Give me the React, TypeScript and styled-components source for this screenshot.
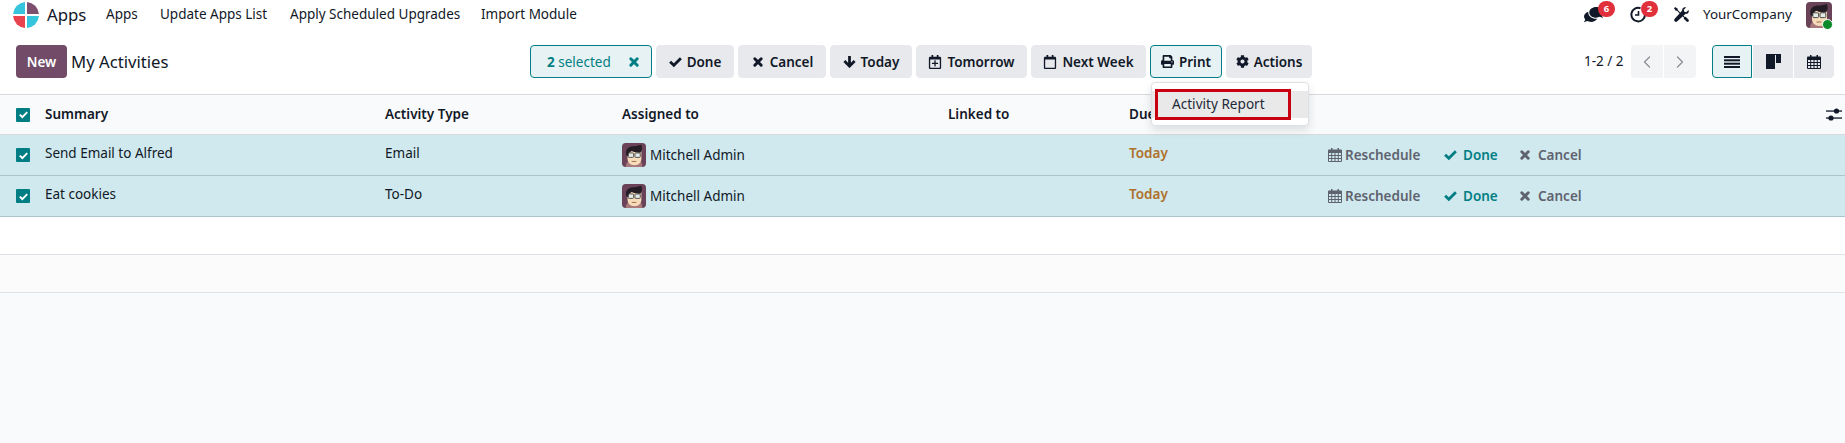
import React from "react";
import styled, { createGlobalStyle } from "styled-components";
import { FaPrint, FaCog, FaRegCalendarPlus, FaRegCalendar, FaComments } from "react-icons/fa";
import { LuChevronLeft, LuChevronRight } from "react-icons/lu";

const Global = createGlobalStyle`
  html, body { margin: 0; padding: 0; background: #f9fafb; }
  body { font-family: "Noto Sans", "Open Sans", sans-serif; font-size: 13.5px; color: #111827; }
  * { box-sizing: border-box; }
`;

const Page = styled.div`
  width: 1845px;
  height: 443px;
  overflow: hidden;
  display: flex;
  flex-direction: column;
`;

const Navbar = styled.header`
  height: 29px;
  background: #fff;
  display: flex;
  align-items: center;
  padding-left: 13px;
`;
const LogoWrap = styled.svg`
  width: 26px;
  height: 26px;
  margin-right: 8px;
`;
const BrandName = styled.span`
  font-size: 16.8px;
  width: 59px;
  color: #111827;
  margin-top: -1px;
`;
const NavItem = styled.span<{ $w: number }>`
  width: ${(p) => p.$w}px;
  color: #111827;
  font-size: 13.5px;
  white-space: nowrap;
  margin-top: -1px;
`;
const NavRight = styled.div`
  margin-left: auto;
  display: flex;
  align-items: center;
  padding-right: 13px;
`;
const Systray = styled.span<{ $w: number }>`
  position: relative;
  width: ${(p) => p.$w}px;
  height: 26px;
  display: flex;
  align-items: center;
  color: #111827;
`;
const Badge = styled.span<{ $left: number }>`
  position: absolute;
  left: ${(p) => p.$left}px;
  top: -1px;
  width: 17px;
  height: 16px;
  border-radius: 8px;
  background: #e0303c;
  color: #fff;
  font-size: 9.5px;
  font-weight: 700;
  display: flex;
  align-items: center;
  justify-content: center;
`;
const Company = styled.span`
  width: 103px;
  font-size: 13.4px;
  white-space: nowrap;
  margin-top: -1px;
`;
const AvatarBox = styled.span`
  position: relative;
  width: 26px;
  height: 26px;
  display: block;
`;
const StatusDot = styled.span`
  position: absolute;
  right: -1px;
  bottom: -2px;
  width: 11px;
  height: 11px;
  border-radius: 50%;
  background: #0b8a2c;
  border: 1px solid #fff;
`;

const ControlPanel = styled.div`
  height: 65px;
  background: #fff;
  padding: 16px 11px 16px 16px;
  display: flex;
  align-items: flex-start;
`;
const NewButton = styled.button`
  width: 51px;
  height: 33px;
  border: 0;
  border-radius: 4px;
  background: #714b67;
  color: #fff;
  font: 600 13.5px "Noto Sans", sans-serif;
  padding: 0;
`;
const Title = styled.h1`
  margin: 0 0 0 4px;
  width: 459px;
  font-size: 16.7px;
  line-height: 33px;
  font-weight: 400;
  color: #111827;
`;
const ButtonRow = styled.div`
  display: flex;
  gap: 4px;
  width: 1054px;
`;
const ActionWrap = styled.div`
  position: relative;
`;
const ActionButton = styled.button<{ $w: number; $active?: boolean }>`
  width: ${(p) => p.$w}px;
  height: 33px;
  padding: 0;
  border-radius: 4px;
  border: 1px solid ${(p) => (p.$active ? "#017e84" : "#e7e9ed")};
  background: ${(p) => (p.$active ? "#e6f2f3" : "#e7e9ed")};
  color: #111827;
  font: 600 13.5px "Noto Sans", sans-serif;
  display: flex;
  align-items: center;
  justify-content: center;
  gap: 5px;
  white-space: nowrap;
  svg { flex: none; }
`;
const SelectedBox = styled.div`
  width: 122px;
  height: 33px;
  border-radius: 4px;
  border: 1px solid #017e84;
  background: #e6f2f3;
  color: #017e84;
  display: flex;
  align-items: center;
  padding: 0 10px 0 16px;
  justify-content: space-between;
  font-size: 13.5px;
  b { font-weight: 700; }
`;
const Menu = styled.div`
  position: absolute;
  left: 1px;
  top: 37px;
  width: 158px;
  height: 44px;
  background: #fff;
  border: 1px solid #dee2e6;
  border-radius: 4px;
  box-shadow: 0 4px 10px rgba(0, 0, 0, 0.12);
  padding-top: 8px;
  z-index: 5;
`;
const MenuItem = styled.div`
  position: relative;
  height: 27px;
  background: #e9e9ea;
  padding-left: 20px;
  font-size: 13.6px;
  line-height: 26px;
  color: #1f2937;
`;
const Highlight = styled.span`
  position: absolute;
  left: 3px;
  top: -2px;
  width: 136px;
  height: 31px;
  border: 3px solid #c8000f;
`;
const Pager = styled.span`
  width: 47px;
  line-height: 33px;
  font-size: 13.5px;
  white-space: nowrap;
`;
const PagerGroup = styled.div`
  display: flex;
  gap: 1px;
  width: 81px;
`;
const PagerBtn = styled.span<{ $left?: boolean }>`
  width: 32px;
  height: 33px;
  background: #f3f4f5;
  border-radius: ${(p) => (p.$left ? "4px 0 0 4px" : "0 4px 4px 0")};
  display: flex;
  align-items: center;
  justify-content: center;
  color: #8b8f96;
`;
const ViewGroup = styled.div`
  display: flex;
  gap: 1px;
`;
const ViewBtn = styled.span<{ $active?: boolean; $pos: "l" | "m" | "r" }>`
  width: 40px;
  height: 33px;
  background: ${(p) => (p.$active ? "#e6f2f3" : "#e7e9ed")};
  border: 1px solid ${(p) => (p.$active ? "#017e84" : "#e7e9ed")};
  border-radius: ${(p) => (p.$pos === "l" ? "4px 0 0 4px" : p.$pos === "r" ? "0 4px 4px 0" : "0")};
  display: flex;
  align-items: center;
  justify-content: center;
  color: #111827;
`;

const Table = styled.table`
  width: 1845px;
  table-layout: fixed;
  border-collapse: collapse;
  background: #fff;
`;
const HeadRow = styled.tr`
  height: 40px;
  background: #f9fafb;
  border-top: 1px solid #d8dadd;
  border-bottom: 1px solid #d8dadd;
`;
const Th = styled.th`
  padding: 0 7px 1px;
  text-align: left;
  font-weight: 600;
  font-size: 13.5px;
  color: #111827;
  white-space: nowrap;
`;
const Row = styled.tr`
  height: 41px;
  background: #cfe9ee;
  border-bottom: 1px solid #a8c6cc;
`;
const Td = styled.td<{ $warn?: boolean }>`
  padding: 0 7px 5px;
  font-size: 13.5px;
  white-space: nowrap;
  color: ${(p) => (p.$warn ? "#b0702a" : "#111827")};
  font-weight: ${(p) => (p.$warn ? 600 : 400)};
`;
const EmptyRow = styled.tr<{ $alt?: boolean }>`
  height: 38px;
  background: ${(p) => (p.$alt ? "#fbfbfc" : "#fff")};
  border-bottom: 1px solid #dee2e6;
`;
const CheckCell = styled.td`
  padding: 0 0 0 16px;
`;
const CheckHead = styled.th`
  padding: 0 0 0 16px;
`;
const Check = styled.span`
  width: 14px;
  height: 14px;
  display: flex;
  align-items: center;
  justify-content: center;
  background: #017e84;
  border-radius: 1px;
  color: #fff;
`;
const Assignee = styled.span`
  display: flex;
  align-items: center;
  gap: 4px;
  padding-top: 5px;
`;
const RowActions = styled.div`
  display: flex;
  align-items: center;
  padding-top: 4px;
  padding-left: 1px;
  font-weight: 600;
`;
const RowAction = styled.span<{ $w: number; $teal?: boolean; $gap: number }>`
  width: ${(p) => p.$w}px;
  display: flex;
  align-items: center;
  gap: ${(p) => p.$gap}px;
  color: ${(p) => (p.$teal ? "#017e84" : "#5f636f")};
`;
const AdjustCell = styled.th`
  text-align: right;
  padding: 2px 3px 0 0;
`;

const Logo = () => (
  <LogoWrap viewBox="0 0 26 26">
    <path d="M12 .05A13 13 0 0 0 .05 12H12Z" fill="#35c5dd" />
    <path d="M14 .05A13 13 0 0 1 25.950 12H14Z" fill="#7d4f6f" />
    <path d="M12 25.950A13 13 0 0 1 .05 14H12Z" fill="#e8434f" />
    <path d="M14 25.950A13 13 0 0 0 25.950 14H14Z" fill="#35c5dd" />
  </LogoWrap>
);

const Avatar = ({ size }: { size: number }) => (
  <svg width={size} height={size} viewBox="0 0 26 26" style={{ display: "block", flex: "none" }}>
    <rect width="26" height="26" rx="4" fill="#6a4358" />
    <path d="M4 26c0-4 2-6 4-7h11c2 1 3 3 3 7Z" fill="#a9787a" />
    <path d="M6 9h15v8c0 4-3 7-7.500 7S6 21 6 17Z" fill="#f6dcb8" />
    <path d="M4.500 13C3 5 9 3 14 3.500l7-1.500c1 3 1 6-1 8.500-4 0-7 0-9.500-2L8 10.500V14H6Z" fill="#241d26" />
    <rect x="6.800" y="10.800" width="5.800" height="4.800" rx="1" fill="#e4eae6" stroke="#3a3a3a" strokeWidth=".9" />
    <rect x="14" y="10.800" width="5.800" height="4.800" rx="1" fill="#e4eae6" stroke="#3a3a3a" strokeWidth=".9" />
    <path d="M10.500 20h5" stroke="#9a6a48" strokeWidth="1" />
  </svg>
);

const ClockIcon = () => (
  <svg width="17" height="17" viewBox="0 0 17 17" fill="none" stroke="#111827" strokeWidth="2">
    <path d="M10.500 2.200A6.800 6.800 0 1 0 15 8.500" />
    <path d="M8.500 5v4H5" strokeWidth="1.600" />
  </svg>
);
const ToolsIcon = () => (
  <svg width="15" height="15" viewBox="0 0 16 16" fill="#111827">
    <path d="M1.200 0 4 1.800v1.400l7.500 7.500.9-.3 3 3a1.300 1.300 0 0 1-2 2l-3-3 .3-.9L3.200 4H1.800L0 1.200Z" />
    <path d="M15.500 3.200 13 5.600l-2-.6-.6-2L12.900.5C11-.4 8.500 1 8.700 3.600L.8 12.500a1.900 1.900 0 0 0 2.700 2.700l8.900-7.900c2.600.2 4-2.200 3.100-4.100Z" />
  </svg>
);
const HeavyCheck = ({ w }: { w: number }) => (
  <svg width={w} height={w} viewBox="0 0 14 14" fill="none" stroke="currentColor" strokeWidth="3" style={{ flex: "none" }}>
    <path d="M1.200 7.200 5.200 11 12.800 3.400" />
  </svg>
);
const HeavyX = ({ w }: { w: number }) => (
  <svg width={w} height={w} viewBox="0 0 14 14" fill="none" stroke="currentColor" strokeWidth="3" strokeLinecap="round" style={{ flex: "none" }}>
    <path d="M3.800 3.800l6.400 6.400M10.200 3.800l-6.400 6.400" />
  </svg>
);
const HeavyArrow = () => (
  <svg width={13} height={13} viewBox="0 0 14 14" fill="none" stroke="currentColor" strokeWidth="3" style={{ flex: "none" }}>
    <path d="M7 1v10.500M1.500 6.500 7 12l5.500-5.500" />
  </svg>
);
const ListIcon = () => (
  <svg width="16" height="12" viewBox="0 0 16 12" fill="#111827">
    <rect width="16" height="2" />
    <rect y="3.300" width="16" height="2" />
    <rect y="6.700" width="16" height="2" />
    <rect y="10" width="16" height="2" />
  </svg>
);
const KanbanIcon = () => (
  <svg width="15" height="15" viewBox="0 0 15 15" fill="#111827">
    <path d="M0 0h15v9H10V1H9v14H0Z" />
  </svg>
);
const GridCalendar = ({ w }: { w: number }) => (
  <svg width={w} height={w} viewBox="0 0 14 14" fill="currentColor" style={{ flex: "none" }}>
    <path d="M3 0h1.500v2H3zM9.500 0H11v2H9.500z" />
    <path
      fillRule="evenodd"
      d="M1.200 1.500H13a1 1 0 0 1 1 1V13a1 1 0 0 1-1 1H1a1 1 0 0 1-1-1V2.500a1 1 0 0 1 1.200-1ZM1 5v2h2.200V5Zm3.200 0v2h2.300V5Zm3.300 0v2h2.300V5Zm3.300 0v2H13V5ZM1 8v2h2.200V8Zm3.200 0v2h2.300V8Zm3.300 0v2h2.300V8Zm3.300 0v2H13V8ZM1 11v2h2.200v-2Zm3.200 0v2h2.300v-2Zm3.300 0v2h2.300v-2Zm3.300 0v2H13v-2Z"
    />
  </svg>
);
const AdjustIcon = () => (
  <svg width="16" height="13" viewBox="0 0 16 13" fill="#111827">
    <rect y="2.400" width="16" height="1.300" />
    <circle cx="10.500" cy="3" r="2.600" />
    <rect y="9.400" width="16" height="1.300" />
    <circle cx="5" cy="10" r="2.600" />
  </svg>
);

const Tick = () => (
  <Check>
    <HeavyCheck w={9} />
  </Check>
);

const rows = [
  { summary: "Send Email to Alfred", type: "Email" },
  { summary: "Eat cookies", type: "To-Do" },
];

export default function App() {
  return (
    <Page>
      <Global />
      <Navbar>
        <Logo />
        <BrandName>Apps</BrandName>
        <NavItem $w={54}>Apps</NavItem>
        <NavItem $w={130}>Update Apps List</NavItem>
        <NavItem $w={191}>Apply Scheduled Upgrades</NavItem>
        <NavItem $w={110}>Import Module</NavItem>
        <NavRight>
          <Systray $w={46}>
            <FaComments size={19} style={{ transform: "scaleX(-1)" }} />
            <Badge $left={14}>6</Badge>
          </Systray>
          <Systray $w={44}>
            <ClockIcon />
            <Badge $left={11}>2</Badge>
          </Systray>
          <Systray $w={29}>
            <ToolsIcon />
          </Systray>
          <Company>YourCompany</Company>
          <AvatarBox>
            <Avatar size={26} />
            <StatusDot />
          </AvatarBox>
        </NavRight>
      </Navbar>
      <ControlPanel>
        <NewButton>New</NewButton>
        <Title>My Activities</Title>
        <ButtonRow>
          <SelectedBox>
            <span>
              <b>2</b> selected
            </span>
            <HeavyX w={14} />
          </SelectedBox>
          <ActionButton $w={78}>
            <HeavyCheck w={13} />
            Done
          </ActionButton>
          <ActionButton $w={88}>
            <HeavyX w={14} />
            Cancel
          </ActionButton>
          <ActionButton $w={82}>
            <HeavyArrow />
            Today
          </ActionButton>
          <ActionButton $w={111}>
            <FaRegCalendarPlus size={14} />
            Tomorrow
          </ActionButton>
          <ActionButton $w={115}>
            <FaRegCalendar size={14} />
            Next Week
          </ActionButton>
          <ActionWrap>
            <ActionButton $w={72} $active>
              <FaPrint size={13} />
              Print
            </ActionButton>
            <Menu>
              <MenuItem>
                Activity Report
                <Highlight />
              </MenuItem>
            </Menu>
          </ActionWrap>
          <ActionButton $w={86}>
            <FaCog size={13} />
            Actions
          </ActionButton>
        </ButtonRow>
        <Pager>1-2 / 2</Pager>
        <PagerGroup>
          <PagerBtn $left>
            <LuChevronLeft size={20} strokeWidth={1.5} />
          </PagerBtn>
          <PagerBtn>
            <LuChevronRight size={20} strokeWidth={1.5} />
          </PagerBtn>
        </PagerGroup>
        <ViewGroup>
          <ViewBtn $active $pos="l">
            <ListIcon />
          </ViewBtn>
          <ViewBtn $pos="m">
            <KanbanIcon />
          </ViewBtn>
          <ViewBtn $pos="r">
            <GridCalendar w={14} />
          </ViewBtn>
        </ViewGroup>
      </ControlPanel>
      <Table>
        <colgroup>
          <col width={38} />
          <col width={340} />
          <col width={237} />
          <col width={326} />
          <col width={181} />
          <col width={198} />
          <col width={500} />
          <col width={25} />
        </colgroup>
        <thead>
          <HeadRow>
            <CheckHead>
              <Tick />
            </CheckHead>
            <Th>Summary</Th>
            <Th>Activity Type</Th>
            <Th>Assigned to</Th>
            <Th>Linked to</Th>
            <Th>Due Date</Th>
            <Th />
            <AdjustCell>
              <AdjustIcon />
            </AdjustCell>
          </HeadRow>
        </thead>
        <tbody>
          {rows.map((r) => (
            <Row key={r.summary}>
              <CheckCell>
                <Tick />
              </CheckCell>
              <Td>{r.summary}</Td>
              <Td>{r.type}</Td>
              <Td>
                <Assignee>
                  <Avatar size={24} />
                  Mitchell Admin
                </Assignee>
              </Td>
              <Td />
              <Td $warn>Today</Td>
              <Td>
                <RowActions>
                  <RowAction $w={116} $gap={3}>
                    <GridCalendar w={14} />
                    Reschedule
                  </RowAction>
                  <RowAction $w={74} $gap={6} $teal>
                    <HeavyCheck w={13} />
                    Done
                  </RowAction>
                  <RowAction $w={80} $gap={6}>
                    <HeavyX w={14} />
                    Cancel
                  </RowAction>
                </RowActions>
              </Td>
              <Td />
            </Row>
          ))}
          <EmptyRow>
            <td colSpan={8} />
          </EmptyRow>
          <EmptyRow $alt>
            <td colSpan={8} />
          </EmptyRow>
        </tbody>
      </Table>
    </Page>
  );
}
